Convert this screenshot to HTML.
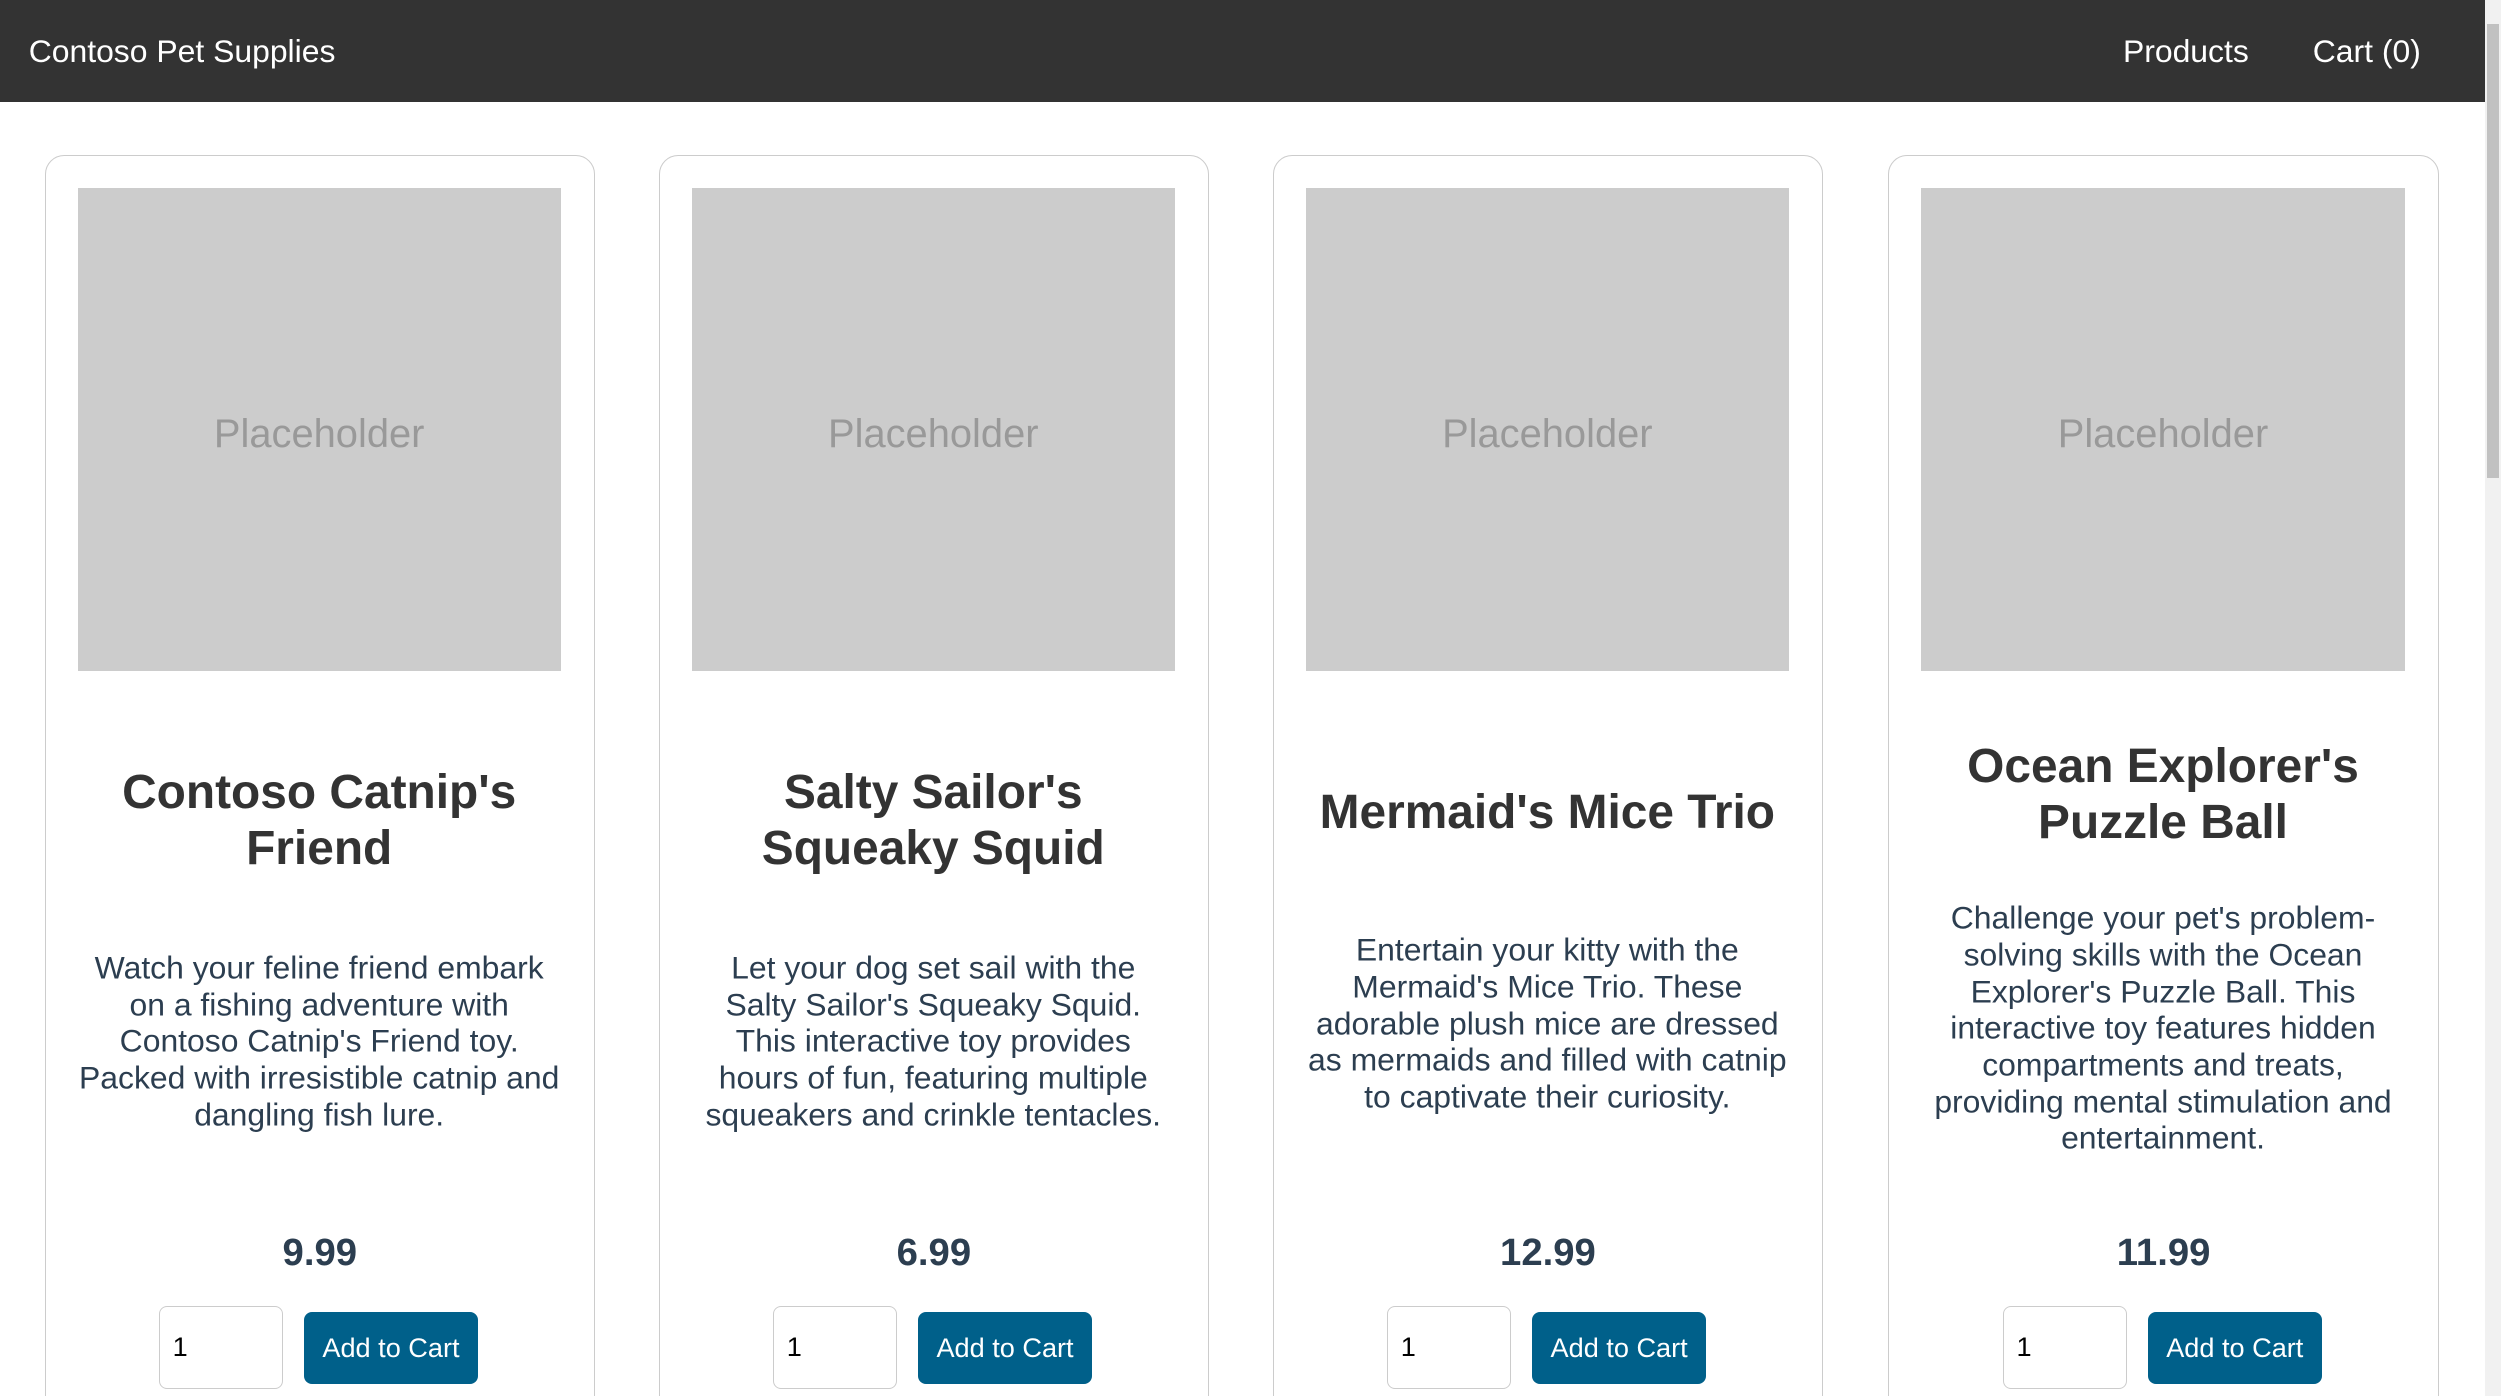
<!DOCTYPE html>
<html><head><meta charset="utf-8"><style>
html,body{margin:0;padding:0;overflow:hidden;background:#fff}
body{width:1568px;height:875px;zoom:1.595;position:relative;font-family:"Liberation Sans",Arial,sans-serif}
.nav{position:absolute;left:0;top:0;width:1558px;height:64px;background:#333;color:#fff;font-size:20px}
.nav span{position:absolute;top:20px;line-height:24px}
.sb{position:absolute;left:1558px;top:0;width:10px;height:875px;background:#f1f1f1}
.sb i{position:absolute;left:1px;top:15px;width:8px;height:285px;background:#c1c1c1}
.card{position:absolute;top:97px;width:345px;height:800px;border:1px solid #ccc;border-radius:12px;box-sizing:border-box}
.img{position:absolute;left:20px;top:20px;width:303px;height:303px;background:#ccc;color:#999;font-size:25px;text-align:center;line-height:309px}
h2,p{position:absolute;left:20px;width:303px;text-align:center;margin:0;transform:translateY(-50%)}
h2{font-size:30px;line-height:35px;color:#333;font-weight:bold}
p{font-size:20px;line-height:23px;color:#2c3e50}
.price{position:absolute;left:0;right:0;top:674px;text-align:center;font-size:24px;font-weight:bold;color:#2c3e50}
.qty{position:absolute;left:71px;top:721px;width:78px;height:52px;box-sizing:border-box;border:1px solid #ccc;border-radius:5px;font-size:17px;padding-left:8px;line-height:50px;color:#000}
.btn{position:absolute;left:162px;top:725px;width:109px;height:45px;background:#00608a;color:#fff;border-radius:5px;font-size:17px;text-align:center;line-height:45px}
</style></head><body>
<div class="nav"><span style="left:18px">Contoso Pet Supplies</span><span style="left:1331px">Products</span><span style="left:1450px">Cart (0)</span></div>
<div class="sb"><i></i></div>

<div class="card" style="left:28px"><div class="img">Placeholder</div>
<h2 style="top:417px">Contoso Catnip's<br>Friend</h2><p style="top:555px">Watch your feline friend embark on a fishing adventure with Contoso Catnip's Friend toy. Packed with irresistible catnip and dangling fish lure.</p>
<div class="price">9.99</div><div class="qty">1</div><div class="btn">Add to Cart</div></div>

<div class="card" style="left:413px"><div class="img">Placeholder</div>
<h2 style="top:417px">Salty Sailor's<br>Squeaky Squid</h2><p style="top:555px">Let your dog set sail with the Salty Sailor's Squeaky Squid. This interactive toy provides hours of fun, featuring multiple squeakers and crinkle tentacles.</p>
<div class="price">6.99</div><div class="qty">1</div><div class="btn">Add to Cart</div></div>

<div class="card" style="left:798px"><div class="img">Placeholder</div>
<h2 style="top:412px">Mermaid's Mice Trio</h2><p style="top:544px">Entertain your kitty with the Mermaid's Mice Trio. These adorable plush mice are dressed as mermaids and filled with catnip to captivate their curiosity.</p>
<div class="price">12.99</div><div class="qty">1</div><div class="btn">Add to Cart</div></div>

<div class="card" style="left:1184px"><div class="img">Placeholder</div>
<h2 style="top:401px">Ocean Explorer's<br>Puzzle Ball</h2><p style="top:547px">Challenge your pet's problem-solving skills with the Ocean Explorer's Puzzle Ball. This interactive toy features hidden compartments and treats, providing mental stimulation and entertainment.</p>
<div class="price">11.99</div><div class="qty">1</div><div class="btn">Add to Cart</div></div>
</body></html>
